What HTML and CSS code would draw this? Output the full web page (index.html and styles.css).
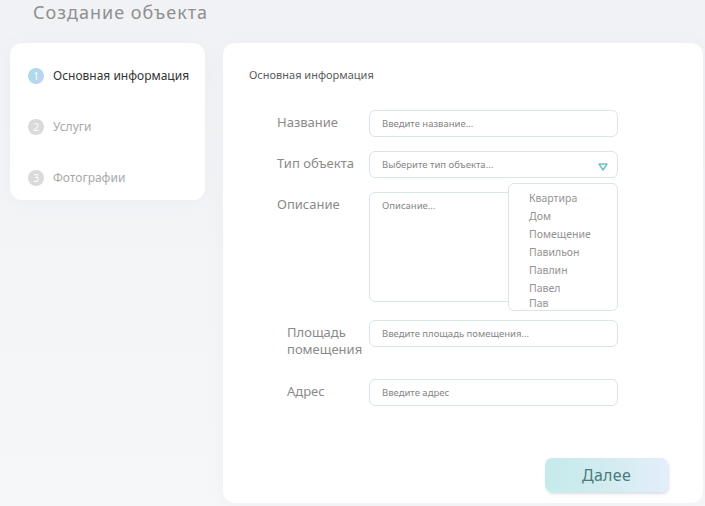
FILE: index.html
```html
<!DOCTYPE html>
<html lang="ru">
<head>
<meta charset="utf-8">
<title>Создание объекта</title>
<link rel="stylesheet" href="styles.css">
</head>
<body>
<div class="page">
  <h1 class="title">Создание объекта</h1>
  <div class="layout">
    <aside class="steps">
      <div class="step active"><span class="num">1</span><span class="step-label">Основная информация</span></div>
      <div class="step"><span class="num">2</span><span class="step-label">Услуги</span></div>
      <div class="step"><span class="num">3</span><span class="step-label">Фотографии</span></div>
    </aside>
    <main class="card">
      <h2 class="card-title">Основная информация</h2>
      <div class="form">
        <div class="row">
          <label class="label">Название</label>
          <input class="field" type="text" placeholder="Введите название...">
        </div>
        <div class="row">
          <label class="label">Тип объекта</label>
          <div class="select-wrap">
            <div class="field select"><span>Выберите тип объекта...</span>
              <svg class="caret" width="10" height="8" viewBox="0 0 10 8"><path d="M1 1 H9 L5 7 Z" fill="none" stroke="#6cc3c6" stroke-width="1.4" stroke-linejoin="round"/></svg>
            </div>
            <ul class="dropdown">
              <li>Квартира</li>
              <li>Дом</li>
              <li>Помещение</li>
              <li>Павильон</li>
              <li>Павлин</li>
              <li>Павел</li>
              <li class="last">Пав</li>
            </ul>
          </div>
        </div>
        <div class="row row-desc">
          <label class="label">Описание</label>
          <textarea class="field area" placeholder="Описание..."></textarea>
        </div>
        <div class="row row-area">
          <label class="label indent">Площадь помещения</label>
          <input class="field" type="text" placeholder="Введите площадь помещения...">
        </div>
        <div class="row row-addr">
          <label class="label indent">Адрес</label>
          <input class="field" type="text" placeholder="Введите адрес">
        </div>
      </div>
      <div class="actions">
        <button class="btn" type="button">Далее</button>
      </div>
    </main>
  </div>
</div>
</body>
</html>
```
FILE: styles.css
```css
* { box-sizing: border-box; }
html, body { margin: 0; padding: 0; }
body {
  width: 705px;
  height: 506px;
  overflow: hidden;
  font-family: "Noto Sans", "Open Sans", sans-serif;
  background: linear-gradient(180deg, #f1f2f5 0%, #f6f7f9 100%);
}
.page { padding: 0; }
.title {
  margin: 0 0 0 33px;
  font-size: 18px;
  line-height: 25px;
  font-weight: 400;
  color: #8f8f8f;
  letter-spacing: 1px;
}
.layout {
  display: flex;
  align-items: flex-start;
  gap: 18px;
  margin-top: 18px;
  padding-left: 10px;
}
.steps {
  width: 195px;
  height: 157px;
  background: #fff;
  border-radius: 12px;
  padding: 24px 0 0 18px;
  display: flex;
  flex-direction: column;
  gap: 34px;
  box-shadow: 0 2px 18px rgba(120, 130, 150, 0.06);
}
.step { display: flex; align-items: center; gap: 9px; height: 17px; }
.num {
  width: 16px; height: 16px; border-radius: 50%;
  background: #dadada;
  color: #fff;
  font-size: 10px;
  line-height: 16px;
  text-align: center;
  flex: none;
}
.step.active .num { background: linear-gradient(135deg, #9fe2e6 0%, #c9cdf2 100%); }
.step-label { font-size: 12px; color: #a8a8a8; }
.step.active .step-label { color: #333; }
.card {
  width: 480px;
  height: 460px;
  background: #fff;
  border-radius: 12px;
  padding: 25px 26px 0 26px;
  position: relative;
  box-shadow: 0 2px 18px rgba(120, 130, 150, 0.06);
  display: flex;
  flex-direction: column;
}
.card-title {
  margin: 0;
  font-size: 11px;
  line-height: 14px;
  font-weight: 400;
  color: #5c5c5c;
}
.form { margin: 28px 0 0 28px; display: flex; flex-direction: column; }
.row { display: flex; align-items: flex-start; }
.row + .row { margin-top: 14px; }
.row-area { margin-top: 18px !important; }
.row-addr { margin-top: 21px !important; }
.label {
  width: 92px;
  flex: none;
  padding-top: 4px;
  font-size: 13px;
  line-height: 17px;
  color: #8a8a8a;
}
.label.indent { padding-left: 10px; }
.field {
  width: 249px;
  height: 27px;
  border: 1px solid #dbe5e5;
  border-radius: 6px;
  padding: 0 12px;
  font-family: "Noto Sans", "Open Sans", sans-serif;
  font-size: 9.5px;
  color: #555;
  background: #fff;
  outline: none;
}
.field::placeholder { color: #858585; }
.area { height: 110px; padding-top: 6px; resize: none; line-height: 14px; }
.select-wrap { position: relative; }
.select {
  display: flex; align-items: center; justify-content: space-between;
  color: #858585;
  padding-right: 9px;
}
.caret { margin-top: 4px; }
.dropdown {
  position: absolute;
  top: 32px;
  right: 0;
  width: 110px;
  margin: 0;
  padding: 5px 0 1px 20px;
  list-style: none;
  background: #fff;
  border: 1px solid #dbe5e5;
  border-radius: 6px;
  z-index: 2;
}
.dropdown li { font-size: 10.5px; line-height: 18px; color: #939393; }
.dropdown li.last { line-height: 12px; }
.actions { margin-top: auto; display: flex; justify-content: flex-end; padding: 0 9px 11px 0; }
.btn {
  width: 123px;
  height: 34px;
  border: none;
  border-radius: 7px;
  background: linear-gradient(90deg, #c6eaeb 0%, #d2ecef 50%, #e4eefc 100%);
  box-shadow: 1px 2px 3px rgba(90, 110, 120, 0.22);
  font-family: "Noto Sans", "Open Sans", sans-serif;
  font-size: 16px;
  color: #4a7b7e;
  letter-spacing: 0.3px;
  cursor: pointer;
}
```
